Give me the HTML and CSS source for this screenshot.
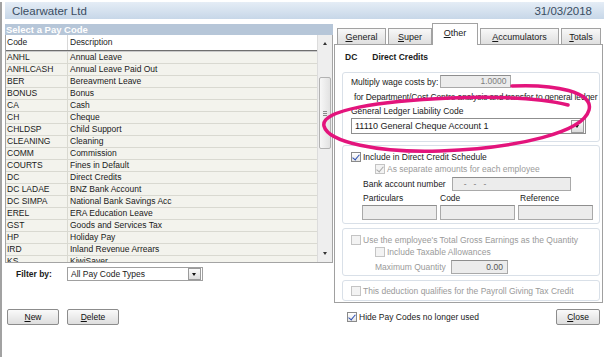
FILE: index.html
```html
<!DOCTYPE html>
<html lang="en">
<head>
  <meta charset="UTF-8">
  <title>Pay Codes</title>
  <link rel="stylesheet" href="styles.css">
</head>
<body>
  <div class="window">
    <header class="titlebar">
      <span>Clearwater Ltd</span>
      <span>31/03/2018</span>
    </header>

    <div class="main">
      <!-- lista de codigos -->
      <section class="left">
        <div class="list-title">Select a Pay Code</div>
        <div class="list">
          <div class="grid">
            <div class="grid-head">
              <div class="c-code">Code</div>
              <div class="c-desc">Description</div>
            </div>
            <div class="grid-body" id="rows"></div>
          </div>
          <div class="scrollbar">
            <span class="arrow-up"></span>
            <span class="thumb"><i></i><i></i><i></i></span>
            <span class="arrow-down"></span>
          </div>
        </div>

        <div class="filter">
          <label class="filter-label">Filter by:</label>
          <div class="combo combo-filter">
            <span>All Pay Code Types</span>
            <span class="combo-btn"></span>
          </div>
        </div>

        <div class="left-buttons">
          <button class="btn"><u>N</u>ew</button>
          <button class="btn"><u>D</u>elete</button>
        </div>
      </section>

      <!-- detalle -->
      <section class="right">
        <div class="tabs">
          <div class="tab tab-general"><u>G</u>eneral</div>
          <div class="tab tab-super"><u>S</u>uper</div>
          <div class="tab tab-other active"><u>O</u>ther</div>
          <div class="tab tab-acc"><u>A</u>ccumulators</div>
          <div class="tab tab-totals"><u>T</u>otals</div>
        </div>
        <div class="tab-body">
          <div class="rec-title"><b>DC</b><b>Direct Credits</b></div>

          <div class="group group-gl">
            <div class="row">
              <span>Multiply wage costs by:</span>
              <div class="field field-mult">1.0000</div>
            </div>
            <div class="note">for Department/Cost Centre analysis and transfer to general ledger</div>
            <div class="gl-label">General Ledger Liability Code</div>
            <div class="combo combo-gl">
              <span>11110 General Cheque Account 1</span>
              <span class="combo-btn"></span>
            </div>
          </div>

          <div class="group group-dc">
            <div class="check-row">
              <span class="check checked"></span>
              <span>Include in Direct Credit Schedule</span>
            </div>
            <div class="check-row indent disabled">
              <span class="check checked"></span>
              <span>As separate amounts for each employee</span>
            </div>
            <div class="row bank-row">
              <span>Bank account number</span>
              <div class="field field-bank"><span>-</span><span>-</span><span>-</span></div>
            </div>
            <div class="ref-labels">
              <span>Particulars</span>
              <span>Code</span>
              <span>Reference</span>
            </div>
            <div class="ref-fields">
              <div class="field"></div>
              <div class="field"></div>
              <div class="field"></div>
            </div>
          </div>

          <div class="group group-qty disabled">
            <div class="check-row">
              <span class="check"></span>
              <span>Use the employee's Total Gross Earnings as the Quantity</span>
            </div>
            <div class="check-row indent">
              <span class="check"></span>
              <span>Include Taxable Allowances</span>
            </div>
            <div class="row max-row">
              <span>Maximum Quantity</span>
              <div class="field field-max">0.00</div>
            </div>
          </div>

          <div class="group group-pg disabled">
            <div class="check-row">
              <span class="check"></span>
              <span>This deduction qualifies for the Payroll Giving Tax Credit</span>
            </div>
          </div>
        </div>

        <div class="right-footer">
          <div class="check-row">
            <span class="check checked"></span>
            <span>Hide Pay Codes no longer used</span>
          </div>
          <button class="btn btn-close"><u>C</u>lose</button>
        </div>
      </section>
    </div>

    <svg class="marker" width="604" height="357" viewBox="0 0 604 357">
      <path d="M512 84 C555 82 594 90 589 108 C583 130 520 146 440 149 C378 151 328 140 324 124 C320 108 380 99 450 96 C505 94 545 97 568 103"
            fill="none" stroke="#e3147c" stroke-width="3.5" stroke-linecap="round"/>
    </svg>
  </div>

  <script>
    var payCodes = [
      ['ANHL', 'Annual Leave'],
      ['ANHLCASH', 'Annual Leave Paid Out'],
      ['BER', 'Bereavment Leave'],
      ['BONUS', 'Bonus'],
      ['CA', 'Cash'],
      ['CH', 'Cheque'],
      ['CHLDSP', 'Child Support'],
      ['CLEANING', 'Cleaning'],
      ['COMM', 'Commission'],
      ['COURTS', 'Fines in Default'],
      ['DC', 'Direct Credits'],
      ['DC LADAE', 'BNZ Bank Account'],
      ['DC SIMPA', 'National Bank Savings Acc'],
      ['EREL', 'ERA Education Leave'],
      ['GST', 'Goods and Services Tax'],
      ['HP', 'Holiday Pay'],
      ['IRD', 'Inland Revenue Arrears'],
      ['KS', 'KiwiSaver']
    ];

    var html = '';
    for (var i = 0; i < payCodes.length; i++) {
      html += '<div class="grid-row"><div class="c-code">' + payCodes[i][0] +
              '</div><div class="c-desc">' + payCodes[i][1] + '</div></div>';
    }
    document.getElementById('rows').innerHTML = html;
  </script>
</body>
</html>
```

FILE: styles.css
```css
body {
  margin: 0;
  width: 604px;
  height: 357px;
  overflow: hidden;
  background: #fff;
  font-family: "Liberation Sans", Arial, sans-serif;
  font-size: 8.5px;
  color: #1a1a1a;
}

.window {
  position: relative;
  height: 357px;
  box-sizing: border-box;
  border-left: 2px solid #a2a2a2;
  border-bottom: 2px solid #b4b4b4;
}

.titlebar {
  margin: 2px 0 0 3px;
  height: 17px;
  padding: 0 12px 0 7px;
  display: flex;
  justify-content: space-between;
  align-items: center;
  background: linear-gradient(#e5edf6, #c7d7e8);
  color: #3a4d62;
  font-size: 11.5px;
}

.main {
  display: flex;
  margin-top: 4px;
}

/* ---- lado izquierdo ---- */
.left {
  width: 328px;
  margin-left: 3px;
  padding-top: 1px;
}

.list-title {
  height: 11px;
  line-height: 11px;
  padding-left: 1px;
  background: #b6c6d8;
  color: #fff;
  font-weight: bold;
  font-size: 9.5px;
}

.list {
  display: flex;
  height: 228px;
  box-sizing: border-box;
  border: 1px solid #a4a4a4;
  border-top: none;
}

.grid {
  flex: 1;
  overflow: hidden;
}

.grid-head {
  display: flex;
  height: 15px;
  line-height: 15px;
  background: #fff;
  border-bottom: 1px solid #6f6f6f;
  box-shadow: 0 1px 0 #c9c9c9;
}

.grid-head .c-code {
  border-right: 1px solid #d8d8d8;
}

.grid-body {
  margin-top: 1px;
}

.grid-row {
  display: flex;
  height: 11px;
  line-height: 11px;
  background: #f3f3ed;
  border-bottom: 1px solid #d9d9d1;
}

.c-code {
  width: 60px;
  padding-left: 1px;
  border-right: 1px solid #d9d9d1;
}

.c-desc {
  flex: 1;
  padding-left: 2px;
}

.scrollbar {
  position: relative;
  width: 14px;
  background: #eeeeee;
  border-left: 1px solid #dcdcdc;
}

.arrow-up,
.arrow-down {
  position: absolute;
  left: 5px;
  width: 0;
  height: 0;
  border-left: 2.5px solid transparent;
  border-right: 2.5px solid transparent;
}

.arrow-up {
  top: 7px;
  border-bottom: 3px solid #333;
}

.arrow-down {
  bottom: 7px;
  border-top: 3px solid #333;
}

.thumb {
  position: absolute;
  top: 42px;
  left: 1px;
  width: 10px;
  height: 70px;
  border: 1px solid #b2b2b2;
  border-radius: 2px;
  background: linear-gradient(90deg, #f7f7f7, #e2e2e2);
  display: flex;
  flex-direction: column;
  justify-content: center;
  align-items: center;
  gap: 1px;
}

.thumb i {
  display: block;
  width: 4px;
  height: 1px;
  background: #8a8a8a;
}

.filter {
  display: flex;
  align-items: center;
  margin-top: 4px;
  height: 14px;
}

.filter-label {
  width: 51px;
  padding-left: 11px;
  font-weight: bold;
}

.combo {
  display: flex;
  align-items: center;
  justify-content: space-between;
  box-sizing: border-box;
  border: 1px solid #a0a0a0;
  background: #fff;
  padding: 0 1px 0 3px;
}

.combo-filter {
  width: 136px;
  height: 14px;
}

.combo-btn {
  position: relative;
  width: 11px;
  height: 10px;
  border: 1px solid #9b9b9b;
  background: linear-gradient(#fbfbfb, #dcdcdc);
}

.combo-btn::after {
  content: "";
  position: absolute;
  left: 3px;
  top: 4px;
  border-left: 2.5px solid transparent;
  border-right: 2.5px solid transparent;
  border-top: 3px solid #111;
}

.left-buttons {
  display: flex;
  gap: 8px;
  margin-top: 28px;
  padding-left: 2px;
}

.btn {
  width: 52px;
  height: 16px;
  padding: 0;
  font-family: "Liberation Sans", Arial, sans-serif;
  font-size: 8.5px;
  color: #111;
  border: 1px solid #8c8c8c;
  border-radius: 2px;
  background: linear-gradient(#fafafa, #dedede);
}

/* ---- lado derecho ---- */
.right {
  width: 269px;
  margin-left: 1px;
}

.tabs {
  display: flex;
  align-items: flex-end;
  height: 21px;
  padding-left: 3px;
  position: relative;
  z-index: 1;
}

.tab {
  height: 16px;
  line-height: 16px;
  box-sizing: border-box;
  text-align: center;
  font-size: 9px;
  border: 1px solid #a2a2a2;
  border-bottom: none;
  background: linear-gradient(#f8f8f8, #dfdfdf);
  margin-right: 2px;
}

.tab-general { width: 49px; }
.tab-super { width: 44px; margin-right: 0; }
.tab-other { width: 46px; }
.tab-acc { width: 79px; }
.tab-totals { width: 40px; margin-right: 0; }

.tab.active {
  height: 22px;
  line-height: 18px;
  background: #fff;
  margin-bottom: -1px;
}

.tab-body {
  height: 259px;
  box-sizing: border-box;
  border: 1px solid #a0a0a0;
  background: #fff;
  padding: 0 2px 0 7px;
}

.rec-title {
  height: 27px;
  box-sizing: border-box;
  padding: 6px 0 0 3px;
  line-height: 12px;
}

.rec-title b + b {
  margin-left: 15px;
}

.group {
  border: 1px solid #d9e0e8;
  border-radius: 3px;
  padding: 0 0 0 8px;
}

.row {
  display: flex;
  align-items: center;
}

.field {
  box-sizing: border-box;
  border: 1px solid #a9a9a9;
  border-top-color: #8e8e8e;
  background: #ececec;
  color: #7d7d7d;
  text-align: right;
  padding-right: 4px;
}

.group-gl {
  height: 70px;
  box-sizing: border-box;
  padding-top: 2px;
}

.field-mult {
  width: 71px;
  height: 13px;
  line-height: 11px;
  margin-left: 2px;
}

.note {
  margin: 3px 0 0 3px;
  line-height: 12px;
  white-space: nowrap;
  letter-spacing: -0.12px;
}

.gl-label {
  margin-top: 2px;
  line-height: 12px;
}

.combo-gl {
  width: 235px;
  height: 16px;
  margin-top: 1px;
  border-color: #8f8f8f;
  font-size: 9px;
}

.combo-gl .combo-btn {
  height: 11px;
}

.group-dc {
  margin-top: 3px;
  height: 79px;
  box-sizing: border-box;
  padding-top: 5px;
}

.check-row {
  display: flex;
  align-items: center;
  height: 12px;
  white-space: nowrap;
}

.check {
  position: relative;
  width: 10px;
  height: 10px;
  box-sizing: border-box;
  border: 1px solid #8a8a8a;
  background: linear-gradient(#ffffff, #e6e6e6);
  margin-right: 2px;
  flex-shrink: 0;
}

.check.checked::after {
  content: "";
  position: absolute;
  left: 2px;
  top: 0px;
  width: 3px;
  height: 6px;
  border-right: 1.5px solid #2c4fb2;
  border-bottom: 1.5px solid #2c4fb2;
  transform: rotate(40deg);
}

.indent {
  margin-left: 24px;
}

.disabled {
  color: #9a9a9a;
}

.disabled .check {
  border-color: #c4c4c4;
  background: #f3f3f3;
}

.disabled .check.checked::after {
  border-color: #a9a9a9;
}

.bank-row {
  margin: 2px 0 0 12px;
}

.field-bank {
  width: 119px;
  height: 14px;
  margin-left: 6px;
  display: flex;
  gap: 7px;
  padding-left: 11px;
  line-height: 12px;
}

.ref-labels {
  display: flex;
  margin: 2px 0 0 12px;
  line-height: 11px;
}

.ref-labels span:nth-child(1) { width: 77px; }
.ref-labels span:nth-child(2) { width: 80px; }

.ref-fields {
  display: flex;
  gap: 3px;
  margin: 1px 0 0 11px;
}

.ref-fields .field {
  width: 75px;
  height: 15px;
}

.group-qty {
  margin-top: 4px;
  height: 48px;
  box-sizing: border-box;
  padding-top: 5px;
}

.max-row {
  margin: 2px 0 0 24px;
}

.field-max {
  width: 57px;
  height: 14px;
  line-height: 12px;
  margin-left: 5px;
  color: #555;
}

.group-pg {
  margin-top: 4px;
  height: 21px;
  box-sizing: border-box;
  padding-top: 4px;
}

.right-footer {
  display: flex;
  align-items: center;
  justify-content: space-between;
  margin-top: 6px;
  padding: 0 3px 0 13px;
}

.btn-close {
  width: 44px;
}

.marker {
  position: absolute;
  left: -2px;
  top: 0;
  pointer-events: none;
}
```
